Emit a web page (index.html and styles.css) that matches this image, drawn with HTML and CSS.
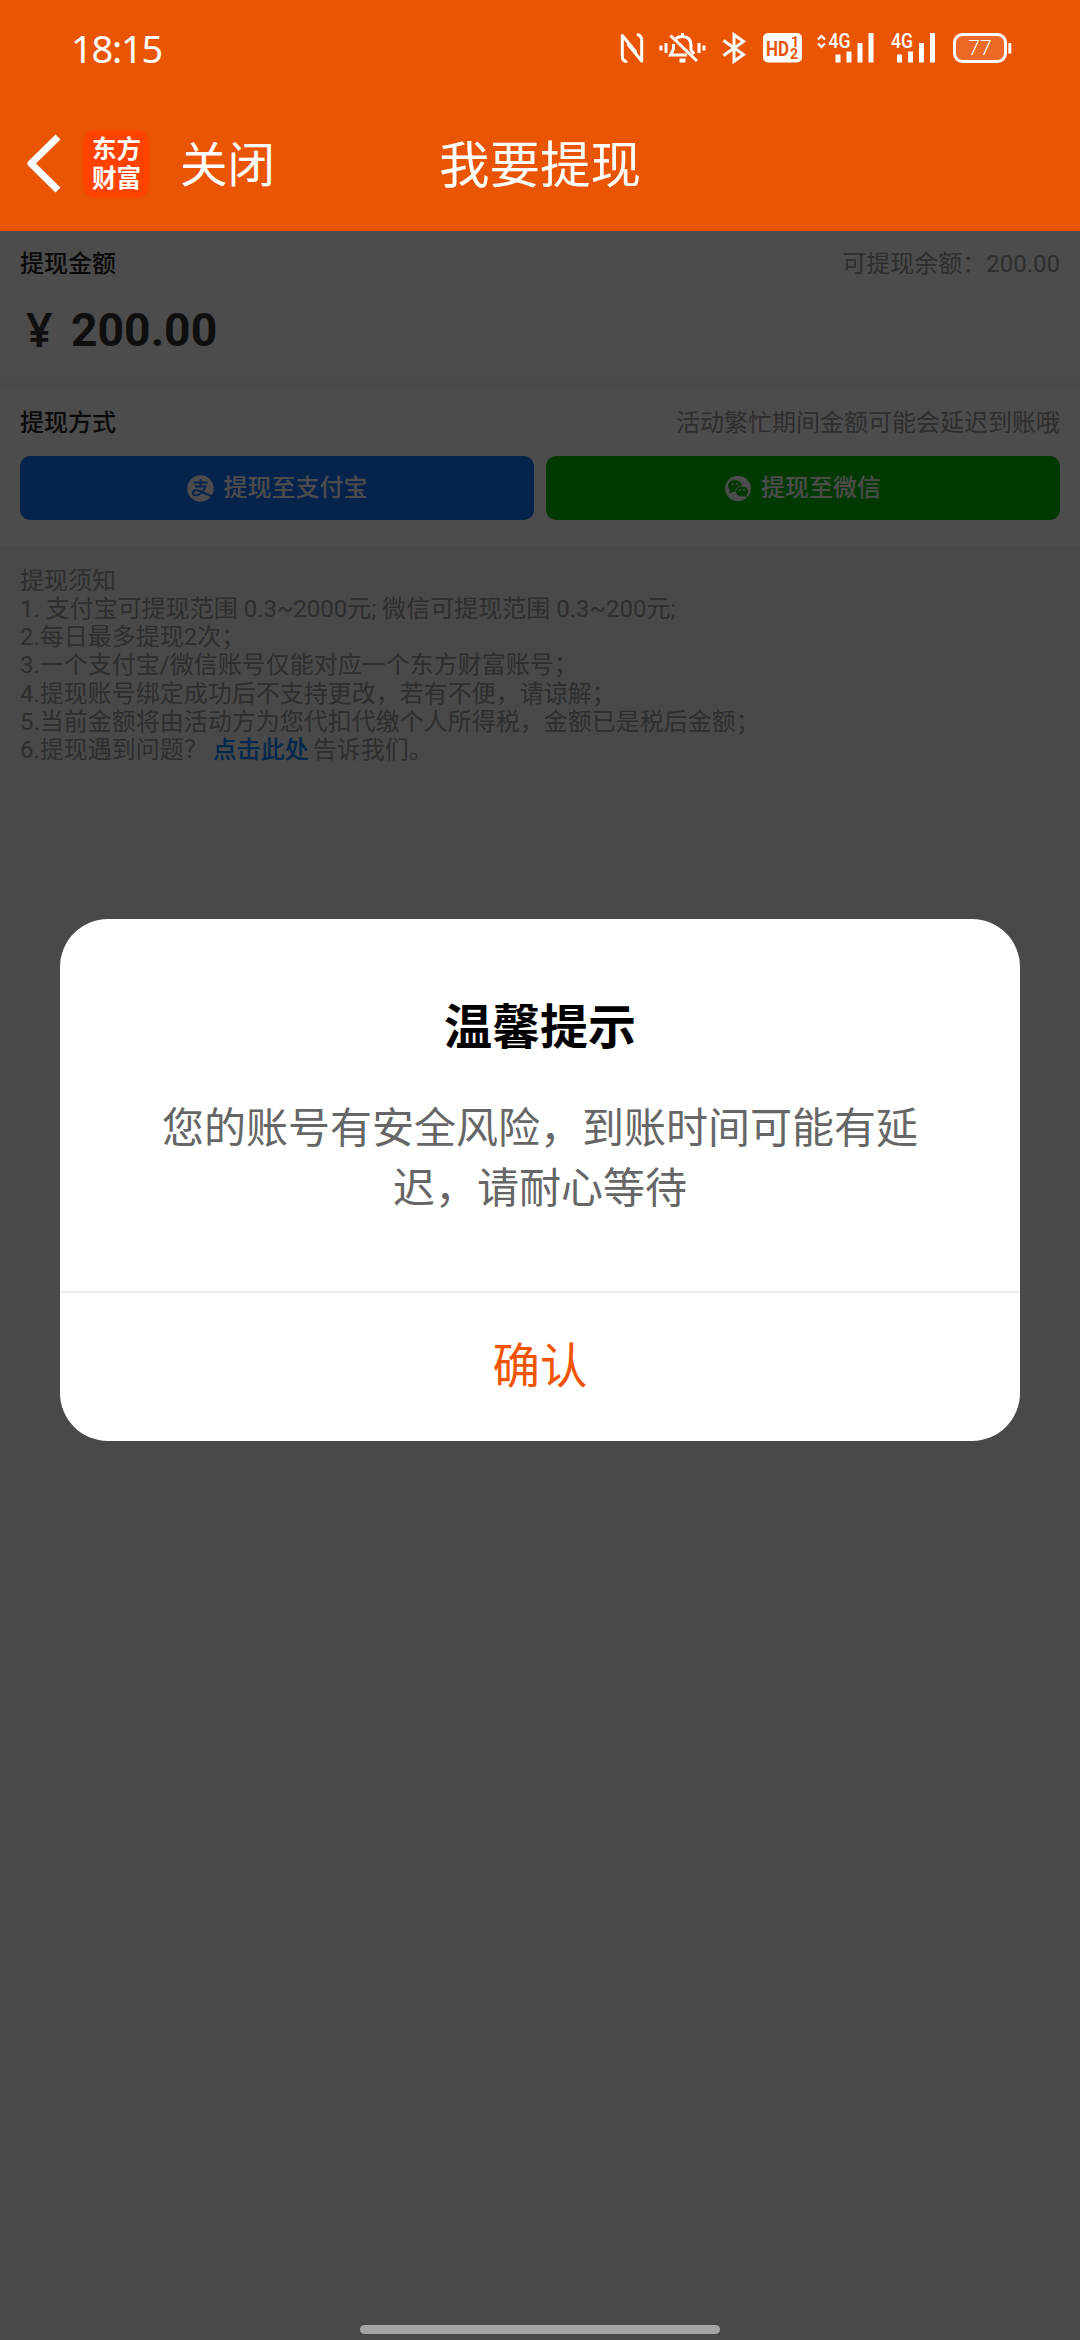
FILE: index.html
```html
<!DOCTYPE html>
<html lang="zh-CN">
<head>
<meta charset="utf-8">
<title>我要提现</title>
<link rel="stylesheet" href="styles.css">
</head>
<body>
<header class="header">
  <div class="status">
    <span class="clock">18:15</span>
    <div class="status-icons">
      <svg class="ic-nfc" width="24" height="30" viewBox="0 0 24 30" fill="none" stroke="#fff" stroke-width="3" stroke-linecap="round" stroke-linejoin="round"><path d="M6 28.5Q2.3 27.500 2.300 23V2.500L15.500 18.500"/><path d="M18 1.800Q21.700 3 21.700 7.500V28L8.500 12"/></svg>
      <svg class="ic-bell" width="48" height="30" viewBox="0 0 48 30" fill="none" stroke="#fff" stroke-width="3"><path d="M2 12.500v5M7 10v10M40 10v10M45 12.500v5"/><path d="M11.500 2.500L38 28"/><path d="M23.500 0v4M17 5.500Q19.500 3.500 23.500 3.500Q32 3.500 32 12.500V17l3 4"/><path d="M14.500 11V16L11.500 22H28"/><path d="M20.500 27.500h6" stroke-width="4"/></svg>
      <svg class="ic-bt" width="24" height="30" viewBox="0 0 24 30" fill="none" stroke="#fff" stroke-width="3"><path d="M1.500 7.500L21.500 21.500L12 28.300V1.700L21.500 8.500L1.500 22.500"/></svg>
      <svg class="ic-hd" width="40" height="30" viewBox="0 0 40 30"><rect x="0" y="0" width="39" height="29.500" rx="5" fill="#fff"/><text class="hd-text" x="3" y="22.500" textLength="23" lengthAdjust="spacingAndGlyphs">HD</text><text class="hd-small" x="28" y="14">1</text><text class="hd-small" x="27" y="26">2</text></svg>
      <svg class="ic-sig1" width="58" height="30" viewBox="0 0 58 30"><path d="M2 6.500L5.500 3L9 6.500M2 10.500L5.500 14L9 10.500" fill="none" stroke="#fff" stroke-width="2.200"/><text class="net" x="12.500" y="15" textLength="22" lengthAdjust="spacingAndGlyphs">4G</text><path d="M22 21.500v8M33 18.500v11M44 10v19.500M55 0v29.500" stroke="#fff" stroke-width="5"/></svg>
      <svg class="ic-sig2" width="46" height="30" viewBox="0 0 46 30"><text class="net" x="1" y="15" textLength="22" lengthAdjust="spacingAndGlyphs">4G</text><path d="M9.500 21.500v8M20.500 18.500v11M31.500 10v19.500M42.500 0v29.500" stroke="#fff" stroke-width="5"/></svg>
      <svg class="ic-bat" width="60" height="30" viewBox="0 0 60 30"><rect x="1.500" y="1.500" width="51" height="27" rx="8" fill="#ec6a26" stroke="#fff" stroke-width="3"/><path d="M56.800 10v10.500" stroke="#fff" stroke-width="3"/><text class="bat-text" x="27" y="22.300" text-anchor="middle">77</text></svg>
    </div>
  </div>
  <nav class="nav">
    <svg class="back" width="36" height="60" viewBox="0 0 36 60" fill="none" stroke="#fff" stroke-width="7" stroke-linejoin="round"><path d="M34 3L7 29.500L34 56"/></svg>
    <div class="logo">东方财富</div>
    <span class="close">关闭</span>
    <h1 class="title">我要提现</h1>
  </nav>
</header>
<main class="page">
  <section class="card amount-card">
    <div class="row"><span class="label">提现金额</span><span class="hint">可提现余额：200.00</span></div>
    <div class="amount"><span class="yen">¥</span><span>200.00</span></div>
  </section>
  <section class="card method-card">
    <div class="row"><span class="label">提现方式</span><span class="hint">活动繁忙期间金额可能会延迟到账哦</span></div>
    <div class="buttons">
      <div class="btn alipay">
        <svg width="27" height="27" viewBox="0 0 27 27"><circle cx="13.500" cy="13.500" r="13.200" fill="#fff"/><path d="M6.500 7.500H20.500M13.500 4V11.500M8 11.500H18.500Q16.500 17 12 19.500Q8 21.300 6 19Q4.800 16.500 8 15.300Q11 14.800 16 17.500L25.500 21.500" fill="none" stroke="#1677ff" stroke-width="2"/></svg>
        <span>提现至支付宝</span>
      </div>
      <div class="btn wechat">
        <svg width="26" height="27" viewBox="0 0 26 27"><circle cx="13" cy="13.500" r="12.800" fill="#fff"/><g fill="#09bb07"><ellipse cx="10" cy="11" rx="7" ry="6"/><path d="M5 14.500l-.500 4l4-2z"/><ellipse cx="17" cy="16.500" rx="6.500" ry="5.500" stroke="#fff" stroke-width="1"/><path d="M19 20.500l3 2.200l-.500-4z"/></g><g fill="#fff"><circle cx="7.800" cy="9.200" r="1"/><circle cx="12.300" cy="9.200" r="1"/><circle cx="15" cy="15" r=".9"/><circle cx="19" cy="15" r=".9"/></g></svg>
        <span>提现至微信</span>
      </div>
    </div>
  </section>
  <section class="notes">
    <p>提现须知</p>
    <p>1. 支付宝可提现范围 0.3~2000元; 微信可提现范围 0.3~200元;</p>
    <p>2.每日最多提现2次；</p>
    <p>3.一个支付宝/微信账号仅能对应一个东方财富账号；</p>
    <p>4.提现账号绑定成功后不支持更改，若有不便，请谅解；</p>
    <p>5.当前金额将由活动方为您代扣代缴个人所得税，金额已是税后金额；</p>
    <p>6.提现遇到问题？ <a class="link">点击此处</a> 告诉我们。</p>
  </section>
  <div class="mask">
    <div class="dialog">
      <h2 class="dialog-title">温馨提示</h2>
      <p class="dialog-text">您的账号有安全风险，到账时间可能有延迟，请耐心等待</p>
      <div class="dialog-ok">确认</div>
    </div>
    <div class="home-bar"></div>
  </div>
</main>
</body>
</html>
```
FILE: styles.css
```css
* { box-sizing: border-box; margin: 0; padding: 0; }
body {
  width: 1080px;
  height: 2340px;
  display: flex;
  flex-direction: column;
  overflow: hidden;
  font-family: Roboto, "Noto Sans CJK SC", sans-serif;
  background: #f5f5f5;
}
svg { display: block; flex: none; overflow: visible; }

.header { height: 231px; background: #ea5504; color: #fff; flex: none; }
.status { height: 96px; display: flex; justify-content: space-between; padding: 0 67px 0 71px; align-items: center; }
.clock { font: 400 38px/50px "Noto Sans", sans-serif; letter-spacing: -1.2px; }
.status-icons { display: flex; align-items: center; }
.ic-nfc { margin-right: 15px; }
.ic-bell { margin-right: 15px; }
.ic-bt { margin-right: 17px; }
.ic-hd { margin-right: 13px; }
.ic-sig1 { margin-right: 16px; }
.ic-sig2 { margin-right: 17px; }
.hd-text { font: 700 21px Roboto, sans-serif; fill: #ea5504; }
.hd-small { font: 700 14px Roboto, sans-serif; fill: #ea5504; }
.net { font: 500 20px Roboto, sans-serif; fill: #fff; }
.bat-text { font: 300 21px Roboto, sans-serif; fill: #fff; }

.nav { height: 135px; display: flex; align-items: center; position: relative; padding: 0 0 0 24px; }
.back { margin-right: 24px; }
.logo {
  width: 64px; height: 66px; border-radius: 10px; background: #ff4200;
  padding: 2px 7px 0 8px;
  font: 700 24.500px/29px "Noto Sans CJK SC", sans-serif;
  box-shadow: 0 0 3px #ff4200;
}
.close { margin-left: 32px; padding-bottom: 4px; font: 400 47.500px/60px "Noto Sans CJK SC", sans-serif; }
.title { position: absolute; left: 0; right: 0; top: 35px; text-align: center; font: 400 50.500px/60px "Noto Sans CJK SC", sans-serif; }

.page { flex: 1; position: relative; background: #f5f5f5; }
.card { background: #fff; padding: 0 20px; }
.amount-card { height: 145px; padding-top: 17px; margin-bottom: 13px; }
.method-card { height: 157px; padding-top: 18px; }
.row { display: flex; justify-content: space-between; line-height: 32px; font-size: 24px; }
.label { color: #222; font-weight: 500; }
.hint { color: #999; }
.amount { display: flex; margin-top: 21px; font: 700 46.300px/58px Roboto, sans-serif; color: #333; }
.yen { width: 51px; padding-left: 6px; font-family: "Noto Sans", sans-serif; font-weight: 600; }
.buttons { display: flex; gap: 12px; margin-top: 17px; }
.btn { flex: 1; height: 64px; border-radius: 10px; display: flex; align-items: center; justify-content: center; gap: 10px; color: #fff; font-size: 24px; font-weight: 500; line-height: 32px; }
.alipay { background: #1677ff; }
.wechat { background: #09bb07; }
.notes { padding: 21px 20px 0; color: #999; font-size: 24px; line-height: 28.150px; white-space: nowrap; }
.link { color: #0084ff; font-weight: 500; margin: 0 -2px 0 -1px; }

.mask { position: absolute; inset: 0; background: rgba(0,0,0,.7); display: flex; flex-direction: column; align-items: center; justify-content: space-between; padding: 688px 0 6px; }
.dialog { width: 960px; height: 522px; border-radius: 48px; background: #fff; font-family: "Noto Sans CJK SC", sans-serif; text-align: center; display: flex; flex-direction: column; }
.dialog-title { margin-top: 69px; font-size: 48px; line-height: 70px; font-weight: 700; color: #000; }
.dialog-text { margin: 37px 100px 0; font-size: 42px; line-height: 60px; color: #666; }
.dialog-ok { margin-top: auto; height: 150px; border-top: 2px solid #eee; font-size: 47.500px; line-height: 140px; color: #f25404; }
.home-bar { width: 360px; height: 9px; border-radius: 5px; background: #a5a5a5; }
```
